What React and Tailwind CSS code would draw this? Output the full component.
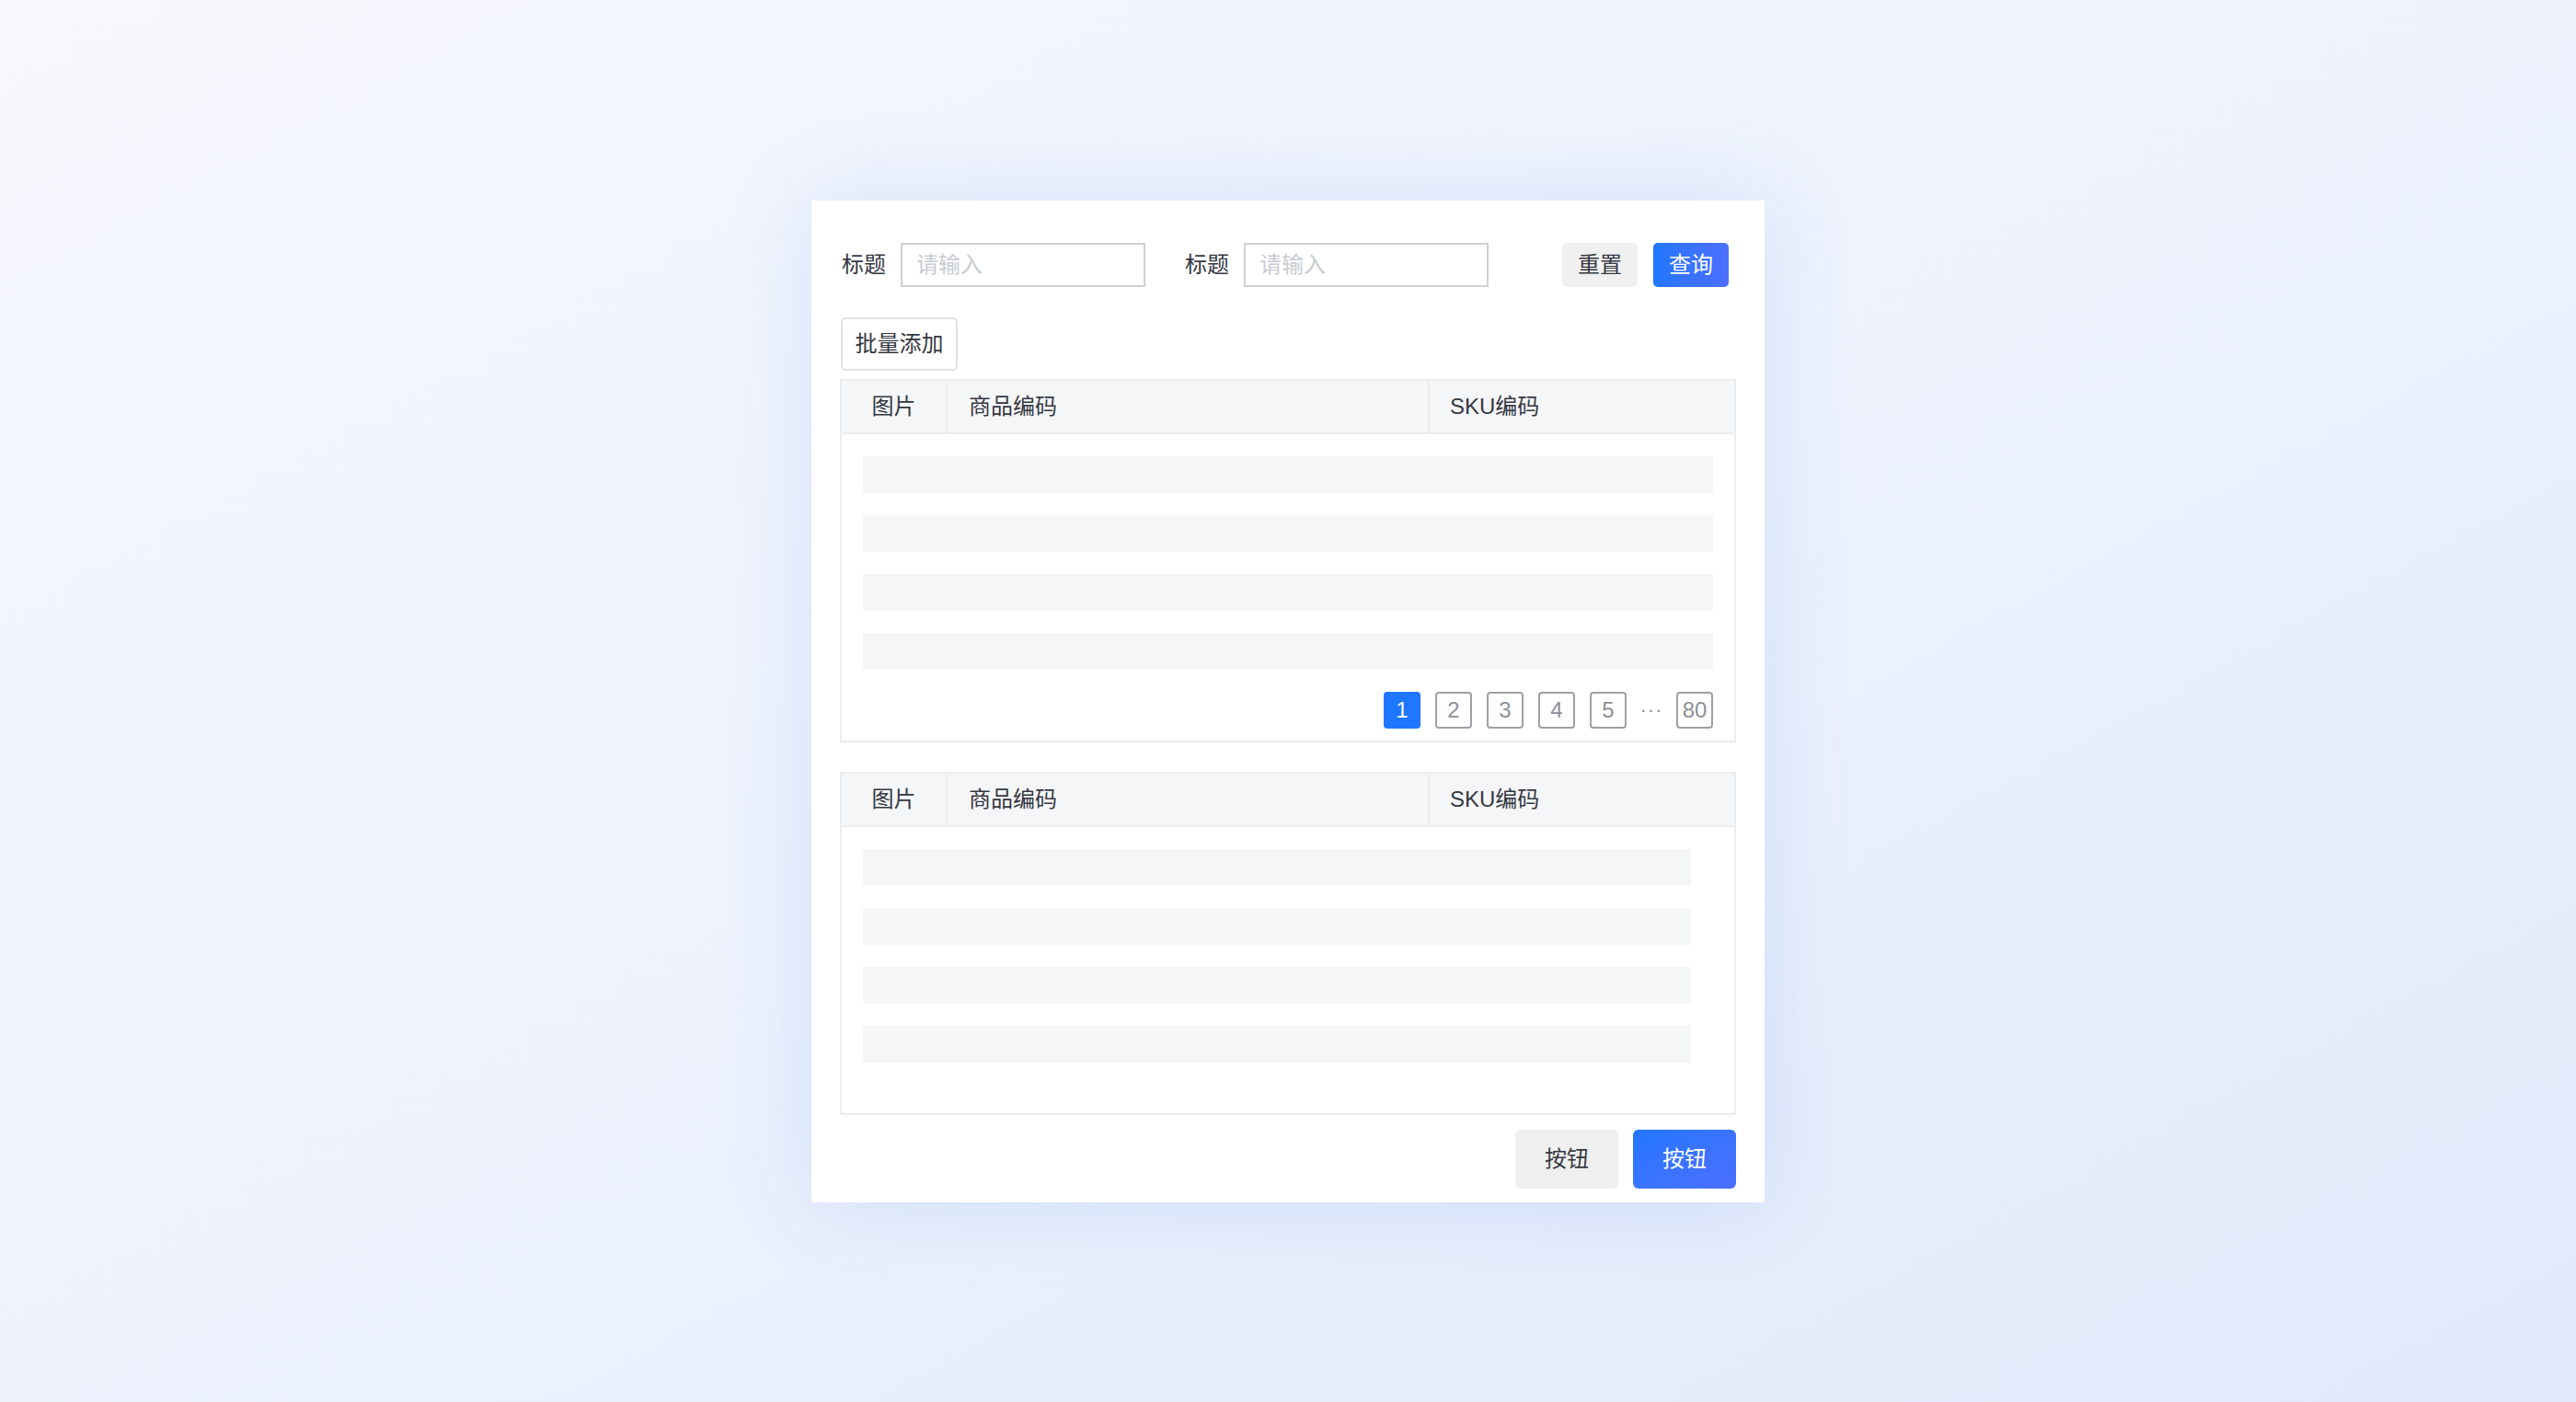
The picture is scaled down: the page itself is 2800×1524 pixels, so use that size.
import React from 'react';

const FONT = 'font-["Liberation_Sans","Noto_Sans_CJK_SC",sans-serif]';

const columns = [
  { key: 'image', title: '图片', className: 'w-[115px] justify-center border-r-2 border-[#ececec]' },
  { key: 'code', title: '商品编码', className: 'w-[524px] pl-[23px] border-r-2 border-[#ececec]' },
  { key: 'sku', title: 'SKU编码', className: 'flex-1 pl-[22px]' },
];

const pages = ['1', '2', '3', '4', '5', '...', '80'];

const SearchField = ({ label, className = '' }) => (
  <div className={`flex items-center ${className}`}>
    <span className="text-[24px] leading-none text-[#363842] ml-[2px]">{label}</span>
    <input
      type="text"
      placeholder="请输入"
      className="ml-[16px] w-[266px] h-[48px] border-2 border-[#cfd0d5] bg-white pl-[15px] text-[24px] text-[#363842] placeholder:text-[#c8cbd1] outline-none"
    />
  </div>
);

const TableHeader = () => (
  <div className="flex h-[58px] bg-[#f5f6f8] border-b-2 border-[#ececec]">
    {columns.map((col) => (
      <div key={col.key} className={`flex items-center text-[24px] leading-none text-[#363842] ${col.className}`}>
        {col.title}
      </div>
    ))}
  </div>
);

// placeholder rows while the list is loading
const SkeletonRows = ({ count = 4 }) => (
  <div className="flex flex-col gap-[24px]">
    {[...Array(count)].map((_, i) => (
      <div key={i} className="h-[40px] bg-[#f5f6f7]"></div>
    ))}
  </div>
);

const Pagination = ({ current = '1' }) => (
  <div className="flex justify-end items-center gap-[16px] mt-[24px]">
    {pages.map((p) =>
      p === '...' ? (
        <span key={p} className="w-[22px] flex justify-center text-[22px] leading-none text-[#8d8f97] tracking-[1px]">
          ···
        </span>
      ) : (
        <button
          key={p}
          className={`w-[40px] h-[40px] rounded-[4px] flex items-center justify-center text-[24px] leading-none ${
            p === current
              ? 'bg-[#1f77ff] text-white'
              : 'border-2 border-[#9ea0a8] text-[#8d8f97] bg-white'
          }`}
        >
          {p}
        </button>
      )
    )}
  </div>
);

const App = () => {
  return (
    <div className={`min-h-screen w-full flex items-center justify-center bg-gradient-to-br from-[#f6f8fd] via-[#edf2fd] to-[#e0e9fb] ${FONT}`}>
      <div className="w-[1036px] bg-white pt-[46px] px-[31px] pb-[15px] shadow-[0_0_90px_rgba(70,120,230,0.16)]">
        {/* search bar */}
        <div className="flex items-center h-[48px]">
          <SearchField label="标题" />
          <SearchField label="标题" className="ml-[41px]" />
          <div className="ml-auto mr-[8px] flex items-center gap-[17px]">
            <button className="w-[82px] h-[48px] rounded-[5px] bg-[#f0f0f1] text-[24px] leading-none text-[#363842]">
              重置
            </button>
            <button className="w-[82px] h-[48px] rounded-[5px] bg-gradient-to-r from-[#1f77ff] to-[#4a6fff] text-[24px] leading-none text-white">
              查询
            </button>
          </div>
        </div>

        <button className="mt-[33px] ml-[1px] w-[127px] h-[58px] rounded-[5px] border-2 border-[#e2e2e4] bg-white text-[24px] leading-none text-[#363842]">
          批量添加
        </button>

        {/* product list */}
        <div className="mt-[9px] border-2 border-[#ececec]">
          <TableHeader />
          <div className="px-[23px] pt-[24px] pb-[13px]">
            <SkeletonRows />
            <Pagination />
          </div>
        </div>

        {/* selected list */}
        <div className="mt-[32px] border-2 border-[#ececec]">
          <TableHeader />
          <div className="pl-[23px] pr-[47px] pt-[24px] pb-[55px]">
            <SkeletonRows />
          </div>
        </div>

        <div className="mt-[16px] flex justify-end gap-[16px]">
          <button className="w-[112px] h-[64px] rounded-[6px] bg-[#efefef] text-[24px] leading-none text-[#363842]">
            按钮
          </button>
          <button className="w-[112px] h-[64px] rounded-[6px] bg-gradient-to-br from-[#1f77ff] to-[#4a6fff] text-[24px] leading-none text-white">
            按钮
          </button>
        </div>
      </div>
    </div>
  );
};

export default App;
